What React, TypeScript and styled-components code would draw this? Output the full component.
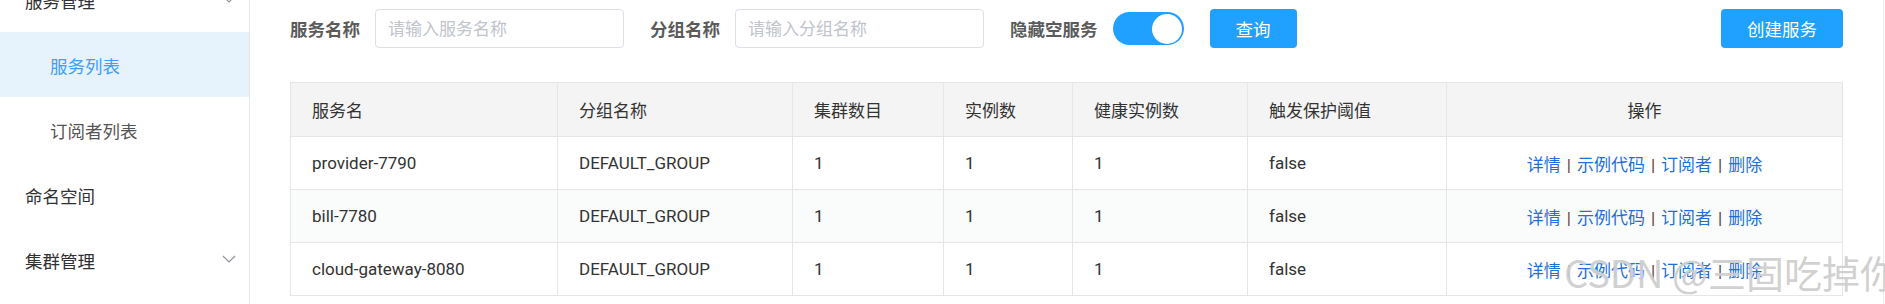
import React from 'react';
import styled, { createGlobalStyle } from 'styled-components';

const GlobalStyle = createGlobalStyle`
  html, body {
    margin: 0;
    padding: 0;
    background: #ffffff;
    overflow: hidden;
  }
  body {
    font-family: Roboto, 'Noto Sans CJK SC', sans-serif;
    color: #333333;
  }
`;

const menu = [
  { label: '服务管理', level: 1, arrow: true },
  { label: '服务列表', level: 2, active: true },
  { label: '订阅者列表', level: 2 },
  { label: '命名空间', level: 1 },
  { label: '集群管理', level: 1, arrow: true },
];

const columns = [
  { title: '服务名', width: 267 },
  { title: '分组名称', width: 235 },
  { title: '集群数目', width: 151 },
  { title: '实例数', width: 129 },
  { title: '健康实例数', width: 175 },
  { title: '触发保护阈值', width: 199 },
  { title: '操作', width: 396, center: true },
];

const rows = [
  { name: 'provider-7790', group: 'DEFAULT_GROUP' },
  { name: 'bill-7780', group: 'DEFAULT_GROUP' },
  { name: 'cloud-gateway-8080', group: 'DEFAULT_GROUP' },
];

const actions = ['详情', '示例代码', '订阅者', '删除'];

export default function App() {
  return (
    <Page>
      <GlobalStyle />
      <Sidebar>
        <MenuList>
          {menu.map((m) => (
            <MenuItem key={m.label} $level={m.level} $active={!!m.active}>
              <span>{m.label}</span>
              {m.arrow && (
                <Chevron width="14" height="8" viewBox="0 0 14 8">
                  <polyline points="1,1 7,7 13,1" fill="none" stroke="#909399" strokeWidth="1.2" />
                </Chevron>
              )}
            </MenuItem>
          ))}
        </MenuList>
      </Sidebar>
      <Main>
        <Toolbar>
          <Label>服务名称</Label>
          <Input placeholder="请输入服务名称" />
          <Label $gap>分组名称</Label>
          <Input placeholder="请输入分组名称" />
          <Label $gap>隐藏空服务</Label>
          <Switch>
            <Knob />
          </Switch>
          <Button>查询</Button>
          <Spacer />
          <Button $wide>创建服务</Button>
        </Toolbar>
        <Table>
          <colgroup>
            {columns.map((c) => (
              <col key={c.title} style={{ width: c.width }} />
            ))}
          </colgroup>
          <thead>
            <tr>
              {columns.map((c) => (
                <Th key={c.title} $center={!!c.center}>{c.title}</Th>
              ))}
            </tr>
          </thead>
          <tbody>
            {rows.map((r, i) => (
              <Row key={r.name} $striped={i === 1}>
                <Td>{r.name}</Td>
                <Td>{r.group}</Td>
                <Td>1</Td>
                <Td>1</Td>
                <Td>1</Td>
                <Td>false</Td>
                <Td $center>
                  {actions.map((a, j) => (
                    <React.Fragment key={a}>
                      {j > 0 && <Sep>|</Sep>}
                      <ActionLink>{a}</ActionLink>
                    </React.Fragment>
                  ))}
                </Td>
              </Row>
            ))}
          </tbody>
        </Table>
      </Main>
      <ScrollEdge />
      <Watermark>CSDN @三固吃掉你</Watermark>
    </Page>
  );
}

const Page = styled.div`
  position: relative;
  display: flex;
  width: 1885px;
  height: 304px;
  overflow: hidden;
`;

const Sidebar = styled.aside`
  width: 249px;
  flex-shrink: 0;
  border-right: 1px solid #e6e6e6;
  overflow: hidden;
`;

const MenuList = styled.ul`
  list-style: none;
  margin: -33px 0 0;
  padding: 0;
`;

const MenuItem = styled.li<{ $level: number; $active: boolean }>`
  height: 65px;
  display: flex;
  align-items: center;
  justify-content: space-between;
  padding: 2px 13px 0 ${(p) => (p.$level === 2 ? 50 : 25)}px;
  box-sizing: border-box;
  font-size: 17.5px;
  color: ${(p) => (p.$active ? '#409eff' : p.$level === 2 ? '#555555' : '#303133')};
  background: ${(p) => (p.$active ? '#e6f2fc' : 'transparent')};
`;

const Chevron = styled.svg`
  display: block;
  margin-top: -4px;
`;

const Main = styled.main`
  flex: 1;
  padding: 9px 40px 0 40px;
`;

const Toolbar = styled.div`
  display: flex;
  align-items: center;
  height: 39px;
`;

const Label = styled.label<{ $gap?: boolean }>`
  font-size: 17.5px;
  font-weight: 700;
  color: #5b5b5b;
  margin-left: ${(p) => (p.$gap ? 26 : 0)}px;
  margin-right: 15px;
  white-space: nowrap;
`;

const Input = styled.input`
  width: 249px;
  height: 39px;
  box-sizing: border-box;
  border: 1px solid #dcdfe6;
  border-radius: 4px;
  padding: 0 12px;
  font-size: 17px;
  font-family: Roboto, 'Noto Sans CJK SC', sans-serif;
  outline: none;
  &::placeholder {
    color: #c0c4cc;
  }
`;

const Switch = styled.div`
  width: 71px;
  height: 33px;
  border-radius: 17px;
  background: #20a0ff;
  display: flex;
  align-items: center;
  justify-content: flex-end;
  padding: 0 2px;
  box-sizing: border-box;
  margin-right: 26px;
`;

const Knob = styled.div`
  width: 30px;
  height: 30px;
  border-radius: 50%;
  background: #ffffff;
`;

const Button = styled.button<{ $wide?: boolean }>`
  width: ${(p) => (p.$wide ? 122 : 87)}px;
  height: 39px;
  border: none;
  border-radius: 4px;
  background: #20a0ff;
  color: #ffffff;
  font-size: 17.5px;
  font-family: Roboto, 'Noto Sans CJK SC', sans-serif;
  padding: 0;
`;

const Spacer = styled.div`
  flex: 1;
`;

const Table = styled.table`
  margin-top: 34px;
  width: 1552px;
  table-layout: fixed;
  border-collapse: collapse;
  font-size: 17px;
  color: #333333;
`;

const Th = styled.th<{ $center?: boolean }>`
  height: 53px;
  padding: 0 0 0 ${(p) => (p.$center ? 0 : 21)}px;
  text-align: ${(p) => (p.$center ? 'center' : 'left')};
  font-weight: 400;
  background: #f4f4f4;
  border: 1px solid #e6e6e6;
`;

const Row = styled.tr<{ $striped: boolean }>`
  background: ${(p) => (p.$striped ? '#fafcfb' : '#ffffff')};
`;

const Td = styled.td<{ $center?: boolean }>`
  height: 52px;
  padding: 0 0 0 ${(p) => (p.$center ? 0 : 21)}px;
  text-align: ${(p) => (p.$center ? 'center' : 'left')};
  border: 1px solid #e6e6e6;
  white-space: nowrap;
`;

const ActionLink = styled.a`
  color: #1e6fd9;
  cursor: pointer;
`;

const Sep = styled.span`
  color: #5a3a32;
  margin: 0 6px;
`;

const ScrollEdge = styled.div`
  width: 2px;
  flex-shrink: 0;
  border-left: 1px solid #ececec;
  background: #fafafa;
`;

const Watermark = styled.div`
  position: absolute;
  left: 1564px;
  top: 244px;
  font-size: 38px;
  font-family: 'Noto Sans CJK SC', sans-serif;
  color: rgba(170, 170, 170, 0.55);
  text-shadow: 0 0 1px rgba(255, 255, 255, 0.9);
  white-space: nowrap;
  pointer-events: none;
`;
